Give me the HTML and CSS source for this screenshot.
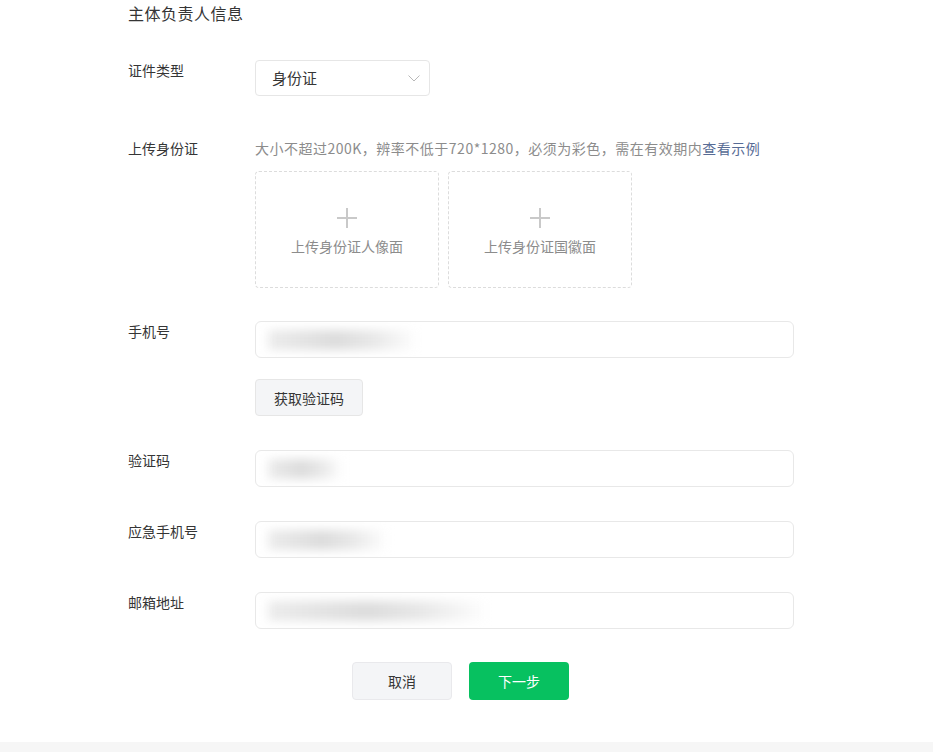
FILE: index.html
```html
<!DOCTYPE html>
<html lang="zh">
<head>
<meta charset="utf-8">
<link rel="stylesheet" href="styles.css">
</head>
<body>
<div class="page">
  <div class="form">
    <div class="title">主体负责人信息</div>

    <div class="row row-type">
      <div class="label">证件类型</div>
      <div class="field">
        <div class="select">
          <span>身份证</span>
          <svg class="chev" width="12" height="7" viewBox="0 0 12 7"><path d="M0.5 0.5 L6 6 L11.5 0.5" fill="none" stroke="#b8b8b8" stroke-width="1"/></svg>
        </div>
      </div>
    </div>

    <div class="row row-upload">
      <div class="label">上传身份证</div>
      <div class="field">
        <div class="hint">大小不超过200K，辨率不低于720*1280，必须为彩色，需在有效期内<a class="link">查看示例</a></div>
        <div class="uploads">
          <div class="upload">
            <svg width="20" height="20" viewBox="0 0 20 20"><path d="M10 0 V20 M0 10 H20" stroke="#c9c9c9" stroke-width="2"/></svg>
            <span>上传身份证人像面</span>
          </div>
          <div class="upload">
            <svg width="20" height="20" viewBox="0 0 20 20"><path d="M10 0 V20 M0 10 H20" stroke="#c9c9c9" stroke-width="2"/></svg>
            <span>上传身份证国徽面</span>
          </div>
        </div>
      </div>
    </div>

    <div class="row row-phone">
      <div class="label">手机号</div>
      <div class="field">
        <div class="input"><span class="blur" style="width:150px"></span></div>
        <button class="btn btn-code">获取验证码</button>
      </div>
    </div>

    <div class="row row-std">
      <div class="label">验证码</div>
      <div class="field">
        <div class="input"><span class="blur" style="width:75px"></span></div>
      </div>
    </div>

    <div class="row row-std">
      <div class="label">应急手机号</div>
      <div class="field">
        <div class="input"><span class="blur" style="width:120px"></span></div>
      </div>
    </div>

    <div class="row row-std">
      <div class="label">邮箱地址</div>
      <div class="field">
        <div class="input"><span class="blur" style="width:220px"></span></div>
      </div>
    </div>

    <div class="actions">
      <button class="btn btn-cancel">取消</button>
      <button class="btn btn-next">下一步</button>
    </div>
  </div>
  <div class="footer"></div>
</div>
</body>
</html>
```

FILE: styles.css
```css
* { box-sizing: border-box; }
html, body {
  margin: 0;
  padding: 0;
  background: #ffffff;
}
body {
  font-family: "Noto Sans CJK SC", "Noto Sans", "Liberation Sans", sans-serif;
  font-size: 14px;
  color: #353535;
}
.page {
  width: 933px;
  height: 752px;
  overflow: hidden;
  display: flex;
  flex-direction: column;
}
.form {
  padding-left: 128px;
  height: 742px;
}
.title {
  font-size: 16px;
  line-height: 24px;
  padding-top: 1px;
  letter-spacing: 0.5px;
  color: #353535;
}
.row {
  display: flex;
  align-items: flex-start;
}
.label {
  width: 127px;
  flex: none;
  line-height: 20px;
  font-size: 14px;
  color: #353535;
}
.field {
  display: flex;
  flex-direction: column;
  align-items: flex-start;
}
.row-type { margin-top: 35px; }
.select {
  width: 175px;
  height: 36px;
  border: 1px solid #e6e6e6;
  border-radius: 4px;
  display: flex;
  align-items: center;
  justify-content: space-between;
  padding: 0 9px 2px 16px;
  font-size: 15px;
  color: #353535;
}
.chev { margin-top: 2px; }

.row-upload { margin-top: 42px; }
.hint {
  line-height: 22px;
  color: #8c8c8c;
  font-size: 14px;
  letter-spacing: 0.5px;
  white-space: nowrap;
  margin-top: -1px;
}
.link { color: #576b95; }
.uploads {
  display: flex;
  gap: 9px;
  margin-top: 12px;
}
.upload {
  width: 184px;
  height: 117px;
  border: 1px dashed #dcdcdc;
  border-radius: 4px;
  display: flex;
  flex-direction: column;
  align-items: center;
  padding-top: 36px;
  color: #8c8c8c;
  font-size: 14px;
}
.upload span {
  line-height: 20px;
  margin-top: 8px;
}

.row-phone { margin-top: 33px; }
.input {
  width: 539px;
  height: 37px;
  border: 1px solid #e8e8e8;
  border-radius: 6px;
  display: flex;
  align-items: center;
  padding-left: 12px;
  overflow: hidden;
}
.blur {
  display: block;
  height: 20px;
  background: linear-gradient(90deg, #ececec 0%, #dcdcdc 45%, #e8e8e8 70%, #ffffff 100%);
  filter: blur(5px);
}
.btn {
  font-family: inherit;
  font-size: 14px;
  border-radius: 4px;
  cursor: pointer;
}
.btn-code {
  margin-top: 21px;
  width: 108px;
  height: 37px;
  background: #f4f5f7;
  border: 1px solid #e6e6e6;
  color: #353535;
}
.row-std { margin-top: 34px; }
.actions {
  display: flex;
  gap: 17px;
  margin-top: 33px;
  padding-left: 224px;
}
.btn-cancel {
  width: 100px;
  height: 38px;
  background: #f4f5f7;
  border: 1px solid #e9e9ec;
  color: #353535;
}
.btn-next {
  width: 100px;
  height: 38px;
  background: #07c160;
  border: none;
  color: #ffffff;
}
.footer {
  flex: 1;
  background: #f6f6f6;
}
```
